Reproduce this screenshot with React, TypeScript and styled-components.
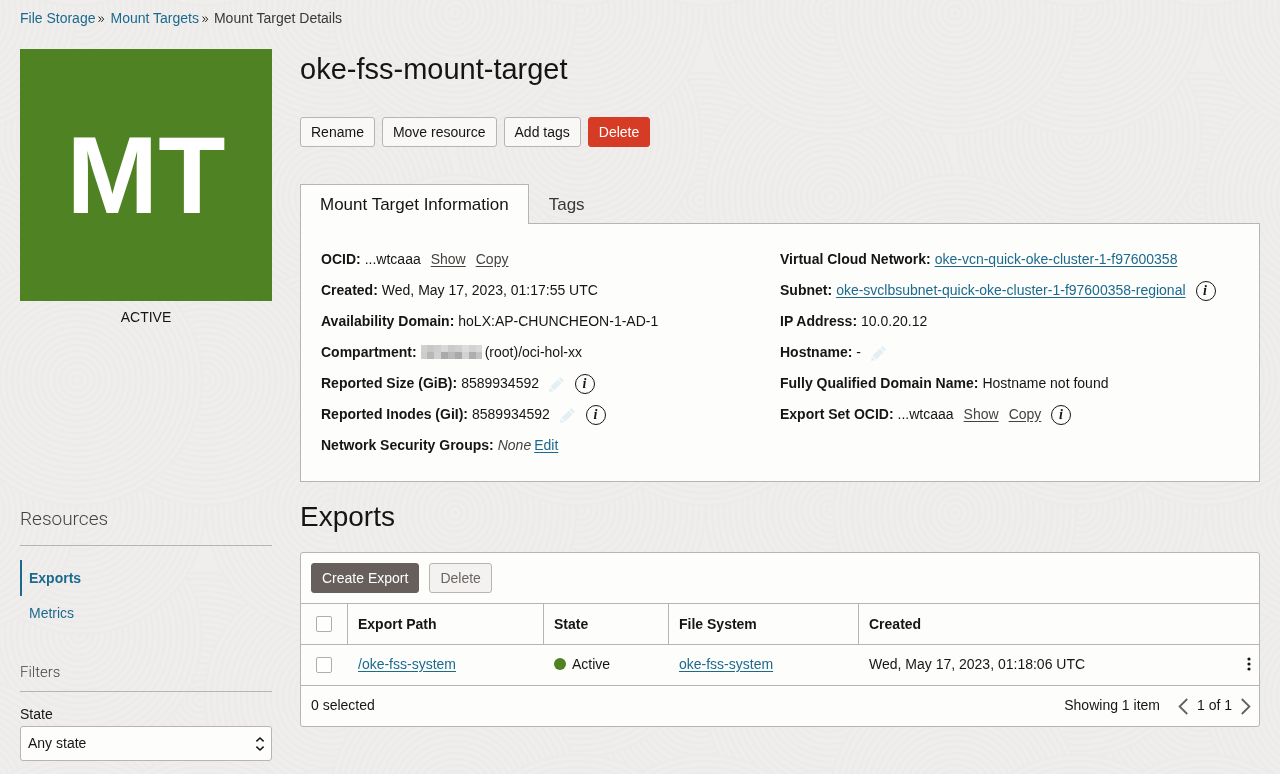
import React from "react";
import styled, { createGlobalStyle } from "styled-components";

const ink = "#161513";
const line = "#b8b4b0";
const blue = "#1b6a8e";
const panel = "#fdfdfb";

const GlobalStyle = createGlobalStyle`
  *, *::before, *::after { box-sizing: border-box; }
  body {
    margin: 0;
    background: #f0eeec;
    color: ${ink};
    font: 14px/20px "Liberation Sans", Arial, sans-serif;
  }
  button, select, input { font: inherit; color: inherit; margin: 0; }
  h1, h2, h3, p, dl, dd, dt { margin: 0; font-weight: normal; }
`;

const BackdropSvg = styled.svg`
  position: fixed;
  inset: 0;
  z-index: -1;
  width: 100%;
  height: 100%;
`;

const Page = styled.div`
  padding: 8px 20px 12px;
`;

const Crumbs = styled.nav`
  display: flex;
  align-items: center;
  color: #3a3835;
`;

const CrumbLink = styled.a`
  color: ${blue};
  text-decoration: none;
`;

const CrumbMark = styled.svg`
  width: 7px;
  height: 8px;
  margin: 1px 5px 0 3px;
`;

const Layout = styled.div`
  display: grid;
  grid-template-columns: 252px minmax(0, 1fr);
  column-gap: 28px;
  margin-top: 21px;
`;

const Badge = styled.div`
  display: flex;
  align-items: center;
  justify-content: center;
  aspect-ratio: 1;
  background: #4f8222;
  color: #fff;
  font-size: 110px;
  line-height: 120px;
  font-weight: bold;
`;

const Status = styled.p`
  margin-top: 6px;
  text-align: center;
`;

const Title = styled.h1`
  font-size: 29px;
  line-height: 40px;
`;

const Actions = styled.div`
  display: flex;
  gap: 7px;
  margin: 28px 0 37px;
`;

type Tone = "plain" | "danger" | "dark" | "muted";
const tones: Record<Tone, string> = {
  plain: `background: #f9f8f6; border-color: ${line}; color: ${ink};`,
  danger: "background: #d63b25; border-color: #d63b25; color: #fff;",
  dark: "background: #665f5b; border-color: #665f5b; color: #fff;",
  muted: `background: #f4f2f1; border-color: ${line}; color: #6b6561;`,
};

const Button = styled.button<{ $tone?: Tone }>`
  height: 30px;
  padding: 0 10px;
  border: 1px solid;
  border-radius: 3px;
  ${(p) => tones[p.$tone ?? "plain"]}
`;

const Tabs = styled.div`
  display: flex;
  margin-bottom: -1px;
  position: relative;
`;

const Tab = styled.button<{ $active?: boolean }>`
  height: 40px;
  padding: 0 19px;
  border: 1px solid ${(p) => (p.$active ? line : "transparent")};
  border-bottom: 0;
  background: ${(p) => (p.$active ? panel : "none")};
  color: ${(p) => (p.$active ? ink : "#3a3835")};
  font-size: 17px;
`;

const Info = styled.div`
  display: grid;
  grid-template-columns: 1fr 1fr;
  padding: 19px 20px 21px;
  border: 1px solid ${line};
  background: ${panel};
`;

const Facts = styled.dl``;

const Fact = styled.div`
  display: flex;
  align-items: center;
  height: 31px;
`;

const Term = styled.dt`
  font-weight: bold;
  margin-right: 4px;
`;

const Value = styled.dd`
  display: flex;
  align-items: center;
  gap: 10px;
`;

const Pair = styled.span`
  display: flex;
  align-items: center;
  gap: 3px;
`;

const Link = styled.a<{ $quiet?: boolean }>`
  color: ${(p) => (p.$quiet ? "#45423f" : blue)};
  text-decoration: underline;
  text-underline-offset: 2px;
`;

const None = styled.em`
  color: #45423f;
`;

const InfoButton = styled.button`
  display: flex;
  align-items: center;
  justify-content: center;
  width: 20px;
  height: 20px;
  margin-top: 3px;
  padding: 0 1px 0 0;
  border: 1px solid ${ink};
  border-radius: 50%;
  background: none;
  font: italic bold 14px/18px "Liberation Serif", serif;
`;

const IconButton = styled.button`
  display: flex;
  align-items: center;
  justify-content: center;
  padding: 0;
  border: 0;
  background: none;
`;

const PencilButton = styled(IconButton)`
  margin-top: 3px;
  margin-right: 1px;
`;

const Heading = styled.h2`
  font-size: 28px;
  line-height: 40px;
  margin: 15px 0;
`;

const Card = styled.section`
  border: 1px solid ${line};
  border-radius: 3px;
  background: ${panel};
`;

const Toolbar = styled.div`
  display: flex;
  gap: 10px;
  padding: 10px;
`;

const Table = styled.table`
  width: 100%;
  table-layout: fixed;
  border-collapse: separate;
  border-spacing: 0;
`;

const Col = styled.col<{ $w?: number }>`
  width: ${(p) => (p.$w ? `${p.$w}px` : "auto")};
`;

const Th = styled.th`
  height: 42px;
  padding: 0 10px;
  border: solid ${line};
  border-width: 1px 1px 1px 0;
  text-align: left;
  &:last-child { border-right: 0; }
`;

const Td = styled.td`
  height: 41px;
  padding: 0 8px 2px 10px;
  border-bottom: 1px solid ${line};
`;

const CheckTd = styled(Td)`
  padding: 0 11px 0 10px;
`;

const Checkbox = styled.input`
  appearance: none;
  display: block;
  width: 16px;
  height: 16px;
  margin: 0 auto;
  border: 1px solid #b3ada7;
  border-radius: 2px;
  background: #fff;
`;

const State = styled.span`
  display: flex;
  align-items: center;
  gap: 6px;
  &::before {
    content: "";
    width: 12px;
    height: 12px;
    border-radius: 50%;
    background: #4f8222;
  }
`;

const RowEnd = styled.div`
  display: flex;
  align-items: center;
  justify-content: space-between;
`;

const Foot = styled.div`
  display: flex;
  align-items: center;
  height: 40px;
  padding: 0 8px 2px 10px;
`;

const Pager = styled.div`
  display: flex;
  align-items: center;
  gap: 9px;
  margin-left: auto;
`;

const Count = styled.span`
  margin-right: 9px;
`;

const SideTitle = styled.h2`
  padding: 24px 0 14px;
  border-bottom: 1px solid ${line};
  color: #45423f;
  font: 300 19px/25px "Roboto", "Liberation Sans", sans-serif;
`;

const FilterTitle = styled.h3`
  padding: 32px 0 9px;
  border-bottom: 1px solid ${line};
  color: #45423f;
  font: 300 15px/20px "Roboto", "Liberation Sans", sans-serif;
`;

const SideNav = styled.nav`
  margin-top: 14px;
`;

const SideLink = styled.a<{ $active?: boolean }>`
  display: block;
  padding-left: 7px;
  border-left: 2px solid ${(p) => (p.$active ? blue : "transparent")};
  color: ${blue};
  font-weight: ${(p) => (p.$active ? "bold" : "normal")};
  line-height: ${(p) => (p.$active ? 36 : 34)}px;
  text-decoration: none;
`;

const FilterLabel = styled.label`
  display: block;
  margin-top: 12px;
`;

const SelectBox = styled.div`
  display: grid;
  align-items: center;
  margin-top: 2px;
  > * { grid-area: 1 / 1; }
`;

const Select = styled.select`
  appearance: none;
  width: 100%;
  height: 35px;
  padding: 0 7px 2px;
  border: 1px solid ${line};
  border-radius: 3px;
  background: ${panel};
`;

const SelectMark = styled.svg`
  justify-self: end;
  width: 10px;
  height: 16px;
  margin-right: 7px;
  pointer-events: none;
`;

const discs = [
  [205, 380, 125],
  [200, 200, 127],
  [330, 197, 125],
  [330, 380, 110],
  [79, 135, 122],
  [81, 10, 124],
  [330, 10, 124],
  [455, 13, 121],
  [455, 300, 125],
  [205, 380, 125],
  [77, 380, 125],
];

function Swirls() {
  return (
    <>
      {discs.flatMap(([cx, cy, r], n) =>
        [-500, 0, 500].flatMap((dx) =>
          [-500, 0, 500]
            .filter((dy) => cx + dx + r > 0 && cx + dx - r < 500 && cy + dy + r > 0 && cy + dy - r < 500)
            .map((dy) => (
              <g key={`${n}-${dx}-${dy}`} transform={`translate(${cx + dx} ${cy + dy})`}>
                <circle r={r} fill="#f0eeec" />
                {Array.from({ length: Math.floor(r / 6) + 1 }, (_, i) => (
                  <circle key={i} r={Math.max(r - i * 6, 1)} fill="none" stroke="#edebe9" strokeWidth="2.4" />
                ))}
              </g>
            )),
        ),
      )}
    </>
  );
}

function Backdrop() {
  return (
    <BackdropSvg aria-hidden="true">
      <defs>
        <pattern id="swirls" width="500" height="500" patternUnits="userSpaceOnUse">
          <rect width="500" height="500" fill="#f0eeec" />
          <Swirls />
        </pattern>
      </defs>
      <rect width="100%" height="100%" fill="url(#swirls)" />
    </BackdropSvg>
  );
}

function Separator() {
  return (
    <CrumbMark viewBox="0 0 7 8" fill="none" stroke={ink} strokeWidth="1" aria-hidden="true">
      <path d="M.6 1.6 2.9 4.2 .6 6.8M3.4 1.6 5.7 4.2 3.4 6.8" />
    </CrumbMark>
  );
}

function Pencil({ label }: { label: string }) {
  return (
    <PencilButton aria-label={label}>
      <svg width="15" height="15" viewBox="0 0 15 15" fill="#e2f0f5">
        <path d="M0 15 .8 10.6 4.4 14.2ZM1.5 9.8 8.8 2.5 12.5 6.2 5.2 13.5ZM9.6 1.7 10.8.5Q11.4 0 12 .5L14.5 3Q15 3.6 14.5 4.2L13.3 5.4Z" />
      </svg>
    </PencilButton>
  );
}

function Redacted() {
  const shades = [
    ["#d0d0d0", "#c8c8c8", "#cecece", "#d8d8d8", "#cacaca", "#cfcfcf", "#dcdcdc", "#d3d3d3", "#d9d9d9"],
    ["#cdcdcd", "#b7b7b7", "#d0d0d0", "#aaaaaa", "#b9b9b9", "#a9a9a9", "#d2d2d2", "#aeaeae", "#c3c3c3"],
  ];
  return (
    <svg width="61" height="14" viewBox="0 0 61 14" role="img" aria-label="Hidden name">
      {shades.map((row, y) =>
        row.map((c, x) => <rect key={`${x}-${y}`} x={x * 7 - 1} y={y * 7} width="7" height="7" fill={c} />),
      )}
    </svg>
  );
}

function Arrow({ next }: { next?: boolean }) {
  return (
    <IconButton aria-label={next ? "Next page" : "Previous page"}>
      <svg width="10" height="20" viewBox="0 0 10 20" fill="none" stroke="#665f5b" strokeWidth="1.8">
        <path d={next ? "M.8 4 8.4 11.5 .8 19" : "M9.2 4 1.6 11.5 9.2 19"} />
      </svg>
    </IconButton>
  );
}

function FactRow({ name, children }: { name: string; children: React.ReactNode }) {
  return (
    <Fact>
      <Term>{name}:</Term>
      <Value>{children}</Value>
    </Fact>
  );
}

export default function App() {
  return (
    <>
      <GlobalStyle />
      <Backdrop />
      <Page>
        <Crumbs aria-label="Breadcrumb">
          <CrumbLink href="#storage">File Storage</CrumbLink>
          <Separator />
          <CrumbLink href="#targets">Mount Targets</CrumbLink>
          <Separator />
          <span>Mount Target Details</span>
        </Crumbs>
        <Layout>
          <aside>
            <Badge>MT</Badge>
            <Status>ACTIVE</Status>
          </aside>
          <main>
            <Title>oke-fss-mount-target</Title>
            <Actions>
              <Button>Rename</Button>
              <Button>Move resource</Button>
              <Button>Add tags</Button>
              <Button $tone="danger">Delete</Button>
            </Actions>
            <Tabs role="tablist">
              <Tab role="tab" aria-selected="true" $active>Mount Target Information</Tab>
              <Tab role="tab" aria-selected="false">Tags</Tab>
            </Tabs>
            <Info>
              <Facts>
                <FactRow name="OCID">
                  <span>...wtcaaa</span>
                  <Link href="#show" $quiet>Show</Link>
                  <Link href="#copy" $quiet>Copy</Link>
                </FactRow>
                <FactRow name="Created">Wed, May 17, 2023, 01:17:55 UTC</FactRow>
                <FactRow name="Availability Domain">hoLX:AP-CHUNCHEON-1-AD-1</FactRow>
                <FactRow name="Compartment">
                  <Pair><Redacted />(root)/oci-hol-xx</Pair>
                </FactRow>
                <FactRow name="Reported Size (GiB)">
                  <span>8589934592</span>
                  <Pencil label="Edit reported size" />
                  <InfoButton>i</InfoButton>
                </FactRow>
                <FactRow name="Reported Inodes (GiI)">
                  <span>8589934592</span>
                  <Pencil label="Edit reported inodes" />
                  <InfoButton>i</InfoButton>
                </FactRow>
                <FactRow name="Network Security Groups">
                  <Pair><None>None</None><Link href="#edit">Edit</Link></Pair>
                </FactRow>
              </Facts>
              <Facts>
                <FactRow name="Virtual Cloud Network">
                  <Link href="#vcn">oke-vcn-quick-oke-cluster-1-f97600358</Link>
                </FactRow>
                <FactRow name="Subnet">
                  <Link href="#subnet">oke-svclbsubnet-quick-oke-cluster-1-f97600358-regional</Link>
                  <InfoButton>i</InfoButton>
                </FactRow>
                <FactRow name="IP Address">10.0.20.12</FactRow>
                <FactRow name="Hostname">
                  <span>-</span>
                  <Pencil label="Edit hostname" />
                </FactRow>
                <FactRow name="Fully Qualified Domain Name">Hostname not found</FactRow>
                <FactRow name="Export Set OCID">
                  <span>...wtcaaa</span>
                  <Link href="#show-set" $quiet>Show</Link>
                  <Link href="#copy-set" $quiet>Copy</Link>
                  <InfoButton>i</InfoButton>
                </FactRow>
              </Facts>
            </Info>
          </main>
          <aside>
            <SideTitle>Resources</SideTitle>
            <SideNav aria-label="Resources">
              <SideLink href="#exports" $active>Exports</SideLink>
              <SideLink href="#metrics">Metrics</SideLink>
            </SideNav>
            <FilterTitle>Filters</FilterTitle>
            <FilterLabel htmlFor="state">State</FilterLabel>
            <SelectBox>
              <Select id="state"><option>Any state</option></Select>
              <SelectMark viewBox="0 0 10 16" fill="none" stroke={ink} strokeWidth="1.5" aria-hidden="true">
                <path d="M1.4 5.4 5 2 8.6 5.4M1.4 10.6 5 14 8.6 10.6" />
              </SelectMark>
            </SelectBox>
          </aside>
          <section>
            <Heading>Exports</Heading>
            <Card>
              <Toolbar>
                <Button $tone="dark">Create Export</Button>
                <Button $tone="muted">Delete</Button>
              </Toolbar>
              <Table>
                <colgroup>
                  <Col $w={47} /><Col $w={196} /><Col $w={125} /><Col $w={190} /><Col />
                </colgroup>
                <thead>
                  <tr>
                    <Th><Checkbox type="checkbox" aria-label="Select all" /></Th>
                    <Th>Export Path</Th>
                    <Th>State</Th>
                    <Th>File System</Th>
                    <Th>Created</Th>
                  </tr>
                </thead>
                <tbody>
                  <tr>
                    <CheckTd><Checkbox type="checkbox" aria-label="Select /oke-fss-system" /></CheckTd>
                    <Td><Link href="#export">/oke-fss-system</Link></Td>
                    <Td><State>Active</State></Td>
                    <Td><Link href="#system">oke-fss-system</Link></Td>
                    <Td>
                      <RowEnd>
                        Wed, May 17, 2023, 01:18:06 UTC
                        <IconButton aria-label="Actions">
                          <svg width="4" height="14" viewBox="0 0 4 14" fill={ink}>
                            <circle cx="2" cy="2" r="1.6" />
                            <circle cx="2" cy="7" r="1.6" />
                            <circle cx="2" cy="12" r="1.6" />
                          </svg>
                        </IconButton>
                      </RowEnd>
                    </Td>
                  </tr>
                </tbody>
              </Table>
              <Foot>
                <span>0 selected</span>
                <Pager>
                  <Count>Showing 1 item</Count>
                  <Arrow />
                  <span>1 of 1</span>
                  <Arrow next />
                </Pager>
              </Foot>
            </Card>
          </section>
        </Layout>
      </Page>
    </>
  );
}
